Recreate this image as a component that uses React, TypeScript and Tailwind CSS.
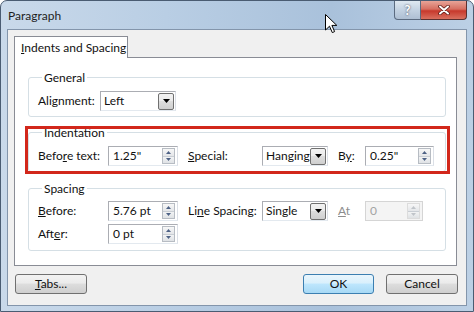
import React from 'react';

// Win7 style combo box with the grey drop button
function Combo({ value, className }: { value: string; className: string }) {
  return (
    <div className={`flex h-[20px] items-center border border-[#abadb3] border-b-[#e3e9ef] border-r-[#dbdfe6] bg-white pl-[3px] pr-px ${className}`}>
      <span className="flex-1 leading-none">{value}</span>
      <span className="flex h-[17px] w-[16px] items-center justify-center rounded-[2px] border border-[#707070] bg-[linear-gradient(#f2f2f2,#ebebeb_45%,#dddddd_50%,#cfcfcf)]">
        <svg width="7" height="4" viewBox="0 0 7 4">
          <path d="M0 0h7L3.5 4z" fill="#000" />
        </svg>
      </span>
    </div>
  );
}

function Spin({ value, className, disabled }: { value: string; className: string; disabled?: boolean }) {
  const arrow = disabled ? '#c0c4c9' : '#4d6185';
  return (
    <div
      className={`flex h-[20px] items-center border pl-[4px] pr-[2px] ${
        disabled ? 'border-[#d5d5d5] bg-[#f4f4f4] text-[#a3a3a3]' : 'border-[#abadb3] border-b-[#e3e9ef] border-r-[#dbdfe6] bg-white'
      } ${className}`}
    >
      <span className="flex-1 leading-none">{value}</span>
      <span className={`flex h-[16px] w-[13px] flex-col border ${disabled ? 'border-[#dcdcdc]' : 'border-[#b7bcc3]'}`}>
        <span className="flex flex-1 items-center justify-center border-b border-[#c9ced4] bg-[linear-gradient(#f7f7f7,#e4e6e9)]">
          <svg width="5" height="3" viewBox="0 0 5 3">
            <path d="M0 3h5L2.5 0z" fill={arrow} />
          </svg>
        </span>
        <span className="flex flex-1 items-center justify-center bg-[linear-gradient(#f2f3f4,#dfe2e5)]">
          <svg width="5" height="3" viewBox="0 0 5 3">
            <path d="M0 0h5L2.5 3z" fill={arrow} />
          </svg>
        </span>
      </span>
    </div>
  );
}

function Group({ title, className, children }: { title: string; className: string; children: React.ReactNode }) {
  return (
    <fieldset className={`ml-[13px] w-[418px] rounded-[3px] border border-[#d5dfe5] pl-[9px] ${className}`}>
      <legend className="ml-[4px] px-[2px] leading-[15px]">{title}</legend>
      {children}
    </fieldset>
  );
}

function Button({ children, className, primary }: { children: React.ReactNode; className: string; primary?: boolean }) {
  return (
    <div
      className={`flex h-[20px] items-center justify-center rounded-[3px] border ${
        primary
          ? 'border-[#3c7fb1] bg-[linear-gradient(#eaf6fd,#d9f0fc_45%,#bee6fd_50%,#a7d9f5)]'
          : 'border-[#707070] bg-[linear-gradient(#f2f2f2,#ebebeb_45%,#dddddd_50%,#cfcfcf)]'
      } ${className}`}
    >
      {children}
    </div>
  );
}

export default function App() {
  return (
    <div className="relative h-[312px] w-[474px] overflow-hidden bg-white font-[Lato,'Liberation_Sans',sans-serif] text-[12px] text-[#111]">
      <div className="flex h-full flex-col rounded-t-[7px] border border-[#4a5c72] bg-[linear-gradient(to_right,#c9d9ea,#b9cee4_35%,#a9c1db_70%,#bcd0e5)]">
        {/* title bar */}
        <div className="flex h-[28px] items-start justify-between">
          <span className="pl-[7px] pt-[7px] leading-[15px] text-[#1e1e1e]">Paragraph</span>
          <div className="mr-[6px] flex">
            <div className="flex h-[19px] w-[27px] items-center justify-center rounded-bl-[4px] border border-t-0 border-[#5b6b80] bg-[linear-gradient(#dfe8f1,#c3d2e2_50%,#aebfd3)]">
              <span className="text-[13px] font-bold leading-none text-white [text-shadow:0_0_2px_#334]">?</span>
            </div>
            <div className="flex h-[19px] w-[46px] items-center justify-center rounded-br-[4px] border border-l-0 border-t-0 border-[#5b3030] bg-[linear-gradient(#e8a498,#d66f61_45%,#c7392c_55%,#d9705f)]">
              <svg width="12" height="10" viewBox="0 0 12 10">
                <path d="M2 1.5l8 7M10 1.5l-8 7" stroke="#5a1a14" strokeWidth="3.6" strokeLinecap="round" />
                <path d="M2 1.5l8 7M10 1.5l-8 7" stroke="#fff" strokeWidth="2" strokeLinecap="round" />
              </svg>
            </div>
          </div>
        </div>

        {/* client area */}
        <div className="mx-[6px] mb-[5px] flex flex-1 flex-col border border-[#8395ab] bg-[#f0f0f0]">
          <div className="relative z-10 ml-[6px] mt-[6px] -mb-px flex h-[22px] w-[114px] items-center border border-b-0 border-[#898c95] bg-white pl-[6px]">
            <span className="leading-none">
              <u>I</u>ndents and Spacing
            </span>
          </div>

          <div className="relative ml-[6px] h-[209px] w-[443px] border border-[#898c95] bg-white pt-[12px]">
            <Group title="General" className="pb-[5px]">
              <div className="mt-[6px] flex items-center">
                <span className="w-[62px]">Alignment:</span>
                <Combo value="Left" className="w-[76px]" />
              </div>
            </Group>

            <Group title="Indentation" className="mt-[8px] pb-[5px]">
              <div className="mt-[6px] flex items-center">
                <span className="w-[70px]">
                  Befo<u>r</u>e text:
                </span>
                <Spin value={'1.25"'} className="w-[70px]" />
                <span className="ml-[10px] w-[74px]">
                  <u>S</u>pecial:
                </span>
                <Combo value="Hanging" className="w-[66px]" />
                <span className="ml-[10px] w-[27px]">
                  B<u>y</u>:
                </span>
                <Spin value={'0.25"'} className="w-[69px]" />
              </div>
            </Group>

            <Group title="Spacing" className="mt-[9px] pb-[6px]">
              <div className="mt-[5px] flex items-center">
                <span className="w-[70px]">
                  <u>B</u>efore:
                </span>
                <Spin value="5.76 pt" className="w-[70px]" />
                <span className="ml-[10px] w-[74px]">
                  Li<u>n</u>e Spacing:
                </span>
                <Combo value="Single" className="w-[66px]" />
                <span className="ml-[10px] w-[27px] text-[#8d8d8d]">
                  <u>A</u>t
                </span>
                <Spin value="0" className="w-[58px]" disabled />
              </div>
              <div className="mt-[3px] flex items-center">
                <span className="w-[70px]">
                  Aft<u>e</u>r:
                </span>
                <Spin value="0 pt" className="w-[70px]" />
              </div>
            </Group>

            {/* red annotation box */}
            <div className="pointer-events-none absolute left-[10px] top-[68px] h-[48px] w-[425px] border-[3px] border-[#d2271b]" />
          </div>

          <div className="mt-[8px] flex">
            <Button className="ml-[7px] w-[72px]">
              <span>
                <u>T</u>abs...
              </span>
            </Button>
            <Button className="ml-[216px] w-[71px]" primary>
              OK
            </Button>
            <Button className="ml-[12px] w-[72px]">Cancel</Button>
          </div>
        </div>
      </div>

      {/* mouse pointer */}
      <svg className="absolute left-[325px] top-[14px]" width="13" height="20" viewBox="0 0 13 20">
        <path d="M0.5 0.5V16L4.5 12.2L7.3 18.6L9.6 17.6L6.9 11.4H11.8Z" fill="#fff" stroke="#000" strokeWidth="1" strokeLinejoin="round" />
      </svg>
    </div>
  );
}
